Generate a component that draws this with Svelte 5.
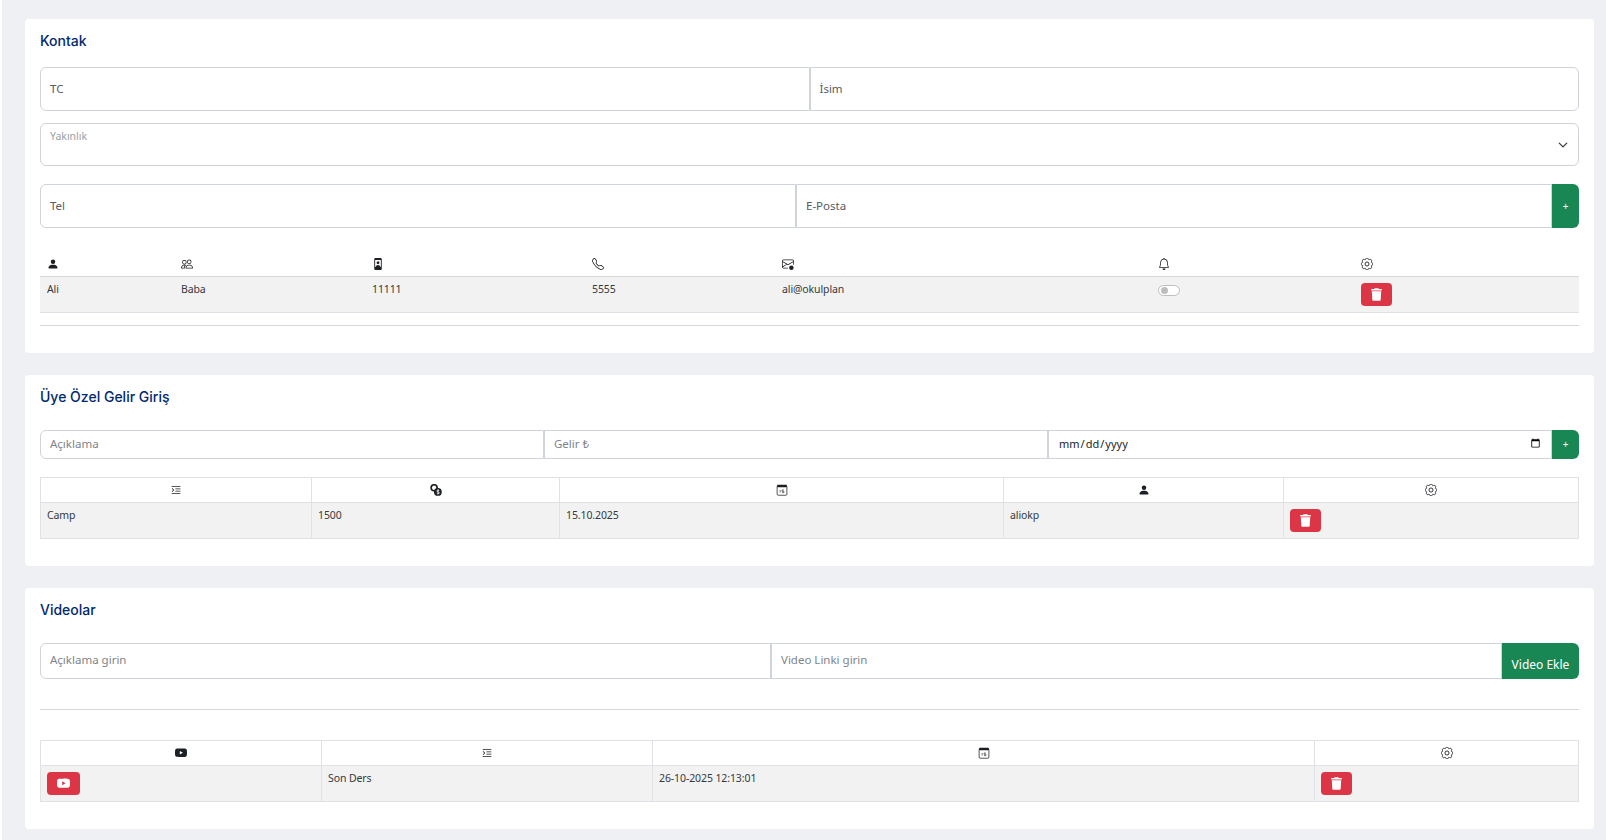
<script lang="ts">
  // Üye detay sayfası: kontak, özel gelir ve video kartları
  const icons: Record<string, string> = {
    person: 'M3 14s-1 0-1-1 1-4 6-4 6 3 6 4-1 1-1 1zm5-6a3 3 0 1 0 0-6 3 3 0 0 0 0 6',
    people:
      'M15 14s1 0 1-1-1-4-5-4-5 3-5 4 1 1 1 1zm-7.978-1L7 12.996c.001-.264.167-1.03.76-1.72C8.312 10.629 9.282 10 11 10c1.717 0 2.687.63 3.24 1.276.593.69.758 1.457.76 1.72l-.008.002-.014.002zM11 7a2 2 0 1 0 0-4 2 2 0 0 0 0 4m3-2a3 3 0 1 1-6 0 3 3 0 0 1 6 0M6.936 9.28a6 6 0 0 0-1.23-.247A7 7 0 0 0 5 9c-4 0-5 3-5 4q0 1 1 1h4.216A2.24 2.24 0 0 1 5 13c0-1.01.377-2.042 1.09-2.904.243-.294.526-.569.846-.816M4.92 10A5.5 5.5 0 0 0 4 13H1c0-.26.164-1.03.76-1.724.545-.636 1.492-1.256 3.16-1.275ZM1.5 5.5a3 3 0 1 1 6 0 3 3 0 0 1-6 0m3-2a2 2 0 1 0 0 4 2 2 0 0 0 0-4',
    badge:
      'M4.5 0A1.5 1.5 0 0 0 3 1.5v13A1.5 1.5 0 0 0 4.5 16h7a1.5 1.5 0 0 0 1.5-1.5v-13A1.5 1.5 0 0 0 11.500 0zM4.200 2.500h7.600v9.500H4.200zM8 4.500a1.900 1.900 0 1 1 0 3.800 1.900 1.900 0 0 1 0-3.800M4.800 12c.4-1.800 1.600-2.800 3.200-2.800s2.800 1 3.200 2.800z',
    phone:
      'M3.654 1.328a.678.678 0 0 0-1.015-.063L1.605 2.3c-.483.484-.661 1.169-.45 1.77a17.6 17.6 0 0 0 4.168 6.608 17.6 17.6 0 0 0 6.608 4.168c.601.211 1.286.033 1.77-.45l1.034-1.034a.678.678 0 0 0-.063-1.015l-2.307-1.794a.68.68 0 0 0-.58-.122l-2.19.547a1.75 1.75 0 0 1-1.657-.459L5.482 8.062a1.75 1.75 0 0 1-.46-1.657l.548-2.19a.68.68 0 0 0-.122-.58zM1.884.511a1.745 1.745 0 0 1 2.612.163L6.29 2.98c.329.423.445.974.315 1.494l-.547 2.19a.68.68 0 0 0 .178.643l2.457 2.457a.68.68 0 0 0 .644.178l2.189-.547a1.75 1.75 0 0 1 1.494.315l2.306 1.794c.829.645.905 1.87.163 2.611l-1.034 1.034c-.74.74-1.846 1.065-2.877.702a18.6 18.6 0 0 1-7.01-4.42 18.6 18.6 0 0 1-4.42-7.009c-.362-1.03-.037-2.137.703-2.877z',
    mail:
      'M2 2a2 2 0 0 0-2 2v8.010A2 2 0 0 0 2 14h5.500a.5.5 0 0 0 0-1H2a1 1 0 0 1-.966-.741l5.640-3.471L8 9.583l7-4.200V8.500a.5.5 0 0 0 1 0V4a2 2 0 0 0-2-2zm3.708 6.208L1 11.105V5.383zM1 4.217V4a1 1 0 0 1 1-1h12a1 1 0 0 1 1 1v.217l-7 4.200zM12.500 10a3 3 0 1 0 0 6 3 3 0 0 0 0-6',
    bell:
      'M8 16a2 2 0 0 0 2-2H6a2 2 0 0 0 2 2M8 1.918l-.797.161A4 4 0 0 0 4 6c0 .628-.134 2.197-.459 3.742-.16.767-.376 1.566-.663 2.258h10.244c-.287-.692-.502-1.490-.663-2.258C12.134 8.197 12 6.628 12 6a4 4 0 0 0-3.203-3.920zM14.220 12c.223.447.481.801.78 1H1c.299-.199.557-.553.78-1C2.680 10.200 3 6.880 3 6c0-2.420 1.720-4.440 4.005-4.901a1 1 0 1 1 1.990 0A5 5 0 0 1 13 6c0 .880.320 4.200 1.220 6',
    indent:
      'M2 3.500a.5.5 0 0 1 .5-.5h11a.5.5 0 0 1 0 1h-11a.5.5 0 0 1-.5-.5m.646 2.146a.5.5 0 0 1 .708 0l2 2a.5.5 0 0 1 0 .708l-2 2a.5.5 0 0 1-.708-.708L4.293 8 2.646 6.354a.5.5 0 0 1 0-.708M7 6.500a.5.5 0 0 1 .5-.5h6a.5.5 0 0 1 0 1h-6a.5.5 0 0 1-.5-.5m0 3a.5.5 0 0 1 .5-.5h6a.5.5 0 0 1 0 1h-6a.5.5 0 0 1-.5-.5m-5 3a.5.5 0 0 1 .5-.5h11a.5.5 0 0 1 0 1h-11a.5.5 0 0 1-.5-.5',
    youtube:
      'M8.051 1.999h.089c.822.003 4.987.033 6.110.335a2.010 2.010 0 0 1 1.415 1.420c.101.380.172.883.220 1.402l.010.104.022.260.008.104c.065.914.073 1.770.074 1.957v.075c-.001.194-.010 1.108-.082 2.060l-.008.105-.009.104c-.050.572-.124 1.140-.235 1.558a2.010 2.010 0 0 1-1.415 1.420c-1.160.312-5.569.334-6.180.335h-.142c-.309 0-1.587-.006-2.927-.052l-.170-.006-.087-.004-.171-.007-.171-.007c-1.110-.049-2.167-.128-2.654-.260a2.010 2.010 0 0 1-1.415-1.419c-.111-.417-.185-.986-.235-1.558L.090 9.820l-.008-.104A31 31 0 0 1 0 7.680v-.123c.002-.215.010-.958.064-1.778l.007-.103.003-.052.008-.104.022-.260.010-.104c.048-.519.119-1.023.220-1.402a2.010 2.010 0 0 1 1.415-1.420c.487-.130 1.544-.210 2.654-.260l.170-.007.172-.006.086-.003.171-.007A100 100 0 0 1 7.858 2zM6.400 5.209v4.818l4.157-2.408z',
  };
  const gearOutline =
    'M9.796 1.343c-.527-1.790-3.065-1.790-3.592 0l-.094.319a.873.873 0 0 1-1.255.520l-.292-.160c-1.640-.892-3.433.902-2.540 2.541l.159.292a.873.873 0 0 1-.520 1.255l-.319.094c-1.790.527-1.790 3.065 0 3.592l.319.094a.873.873 0 0 1 .520 1.255l-.160.292c-.892 1.640.901 3.434 2.541 2.540l.292-.159a.873.873 0 0 1 1.255.520l.094.319c.527 1.790 3.065 1.790 3.592 0l.094-.319a.873.873 0 0 1 1.255-.520l.292.160c1.640.893 3.434-.902 2.540-2.541l-.159-.292a.873.873 0 0 1 .520-1.255l.319-.094c1.790-.527 1.790-3.065 0-3.592l-.319-.094a.873.873 0 0 1-.520-1.255l.160-.292c.893-1.640-.902-3.433-2.541-2.540l-.292.159a.873.873 0 0 1-1.255-.520z';
  const trashPath =
    'M135.200 17.700L128 32H32C14.300 32 0 46.300 0 64S14.300 96 32 96H416c17.700 0 32-14.300 32-32s-14.300-32-32-32H320l-7.200-14.300C307.400 6.800 296.300 0 284.200 0H163.800c-12.100 0-23.200 6.800-28.600 17.700zM416 128H32L53.200 467c1.600 25.300 22.600 45 47.900 45H346.900c25.300 0 46.300-19.700 47.900-45L416 128z';
</script>

{#snippet icon(name: string)}
  <svg class="ico" viewBox="0 0 16 16" aria-hidden="true"><path fill="currentColor" fill-rule="evenodd" d={icons[name]} /></svg>
{/snippet}

{#snippet gear()}
  <svg class="ico" viewBox="0 0 16 16" aria-hidden="true">
    <path d={gearOutline} fill="none" stroke="currentColor" stroke-width="1.200" />
    <circle cx="8" cy="8" r="2.700" fill="none" stroke="currentColor" stroke-width="1.200" />
  </svg>
{/snippet}

{#snippet calendar()}
  <svg class="ico" viewBox="0 0 16 16" aria-hidden="true">
    <rect x="1.500" y="2" width="13" height="13" rx="1.500" fill="none" stroke="currentColor" stroke-width="1" />
    <rect x="1.500" y="1" width="13" height="3.200" rx="1" fill="currentColor" />
    <path d="M5.500 8v3.500M8 8h2.500M8 11.500h2.500M8 8v1.700h2.500v1.800" fill="none" stroke="currentColor" stroke-width="0.8" />
  </svg>
{/snippet}

{#snippet coins()}
  <svg class="ico" viewBox="0 0 16 16" aria-hidden="true">
    <circle cx="5.500" cy="5" r="4" fill="none" stroke="currentColor" stroke-width="2.200" />
    <circle cx="10.500" cy="10.500" r="5.200" fill="currentColor" />
    <path d="M12.300 8.600c-1-.7-3.300-.6-3.300.8s3.600 1 3.600 2.400-2.400 1.300-3.600.7M10.700 7.200v6.600" fill="none" stroke="#fff" stroke-width="1" />
  </svg>
{/snippet}

{#snippet trash()}
  <svg class="trash" viewBox="0 0 448 512" aria-hidden="true"><path fill="currentColor" d={trashPath} /></svg>
{/snippet}

<main class="page">
  <section class="card">
    <h2 class="title first">Kontak</h2>

    <div class="group tall">
      <label class="field"><span>TC</span><input type="text" /></label>
      <label class="field"><span>İsim</span><input type="text" /></label>
    </div>

    <div class="select-box">
      <span class="float-label">Yakınlık</span>
      <svg class="chevron" viewBox="0 0 16 16" aria-hidden="true"><path d="m2 5 6 6 6-6" fill="none" stroke="currentColor" stroke-width="2" stroke-linecap="round" stroke-linejoin="round" /></svg>
    </div>

    <div class="group tall after-select">
      <label class="field"><span>Tel</span><input type="text" /></label>
      <label class="field"><span>E-Posta</span><input type="text" /></label>
      <button class="add">+</button>
    </div>

    <table class="list contacts">
      <colgroup><col /><col /><col /><col /><col /><col /><col /></colgroup>
      <thead>
        <tr>
          <th>{@render icon('person')}</th>
          <th>{@render icon('people')}</th>
          <th>{@render icon('badge')}</th>
          <th>{@render icon('phone')}</th>
          <th>{@render icon('mail')}</th>
          <th>{@render icon('bell')}</th>
          <th>{@render gear()}</th>
        </tr>
      </thead>
      <tbody>
        <tr>
          <td>Ali</td>
          <td>Baba</td>
          <td>11111</td>
          <td>5555</td>
          <td>ali@okulplan</td>
          <td><span class="toggle"></span></td>
          <td><button class="danger">{@render trash()}</button></td>
        </tr>
      </tbody>
    </table>
    <hr class="rule" />
  </section>

  <section class="card income">
    <h2 class="title">Üye Özel Gelir Giriş</h2>

    <div class="group small">
      <input type="text" placeholder="Açıklama" />
      <input type="text" placeholder="Gelir ₺" />
      <input type="date" />
      <button class="add">+</button>
    </div>

    <table class="list grid income-table">
      <colgroup><col /><col /><col /><col /><col /></colgroup>
      <thead>
        <tr>
          <th>{@render icon('indent')}</th>
          <th>{@render coins()}</th>
          <th>{@render calendar()}</th>
          <th>{@render icon('person')}</th>
          <th>{@render gear()}</th>
        </tr>
      </thead>
      <tbody>
        <tr>
          <td>Camp</td>
          <td>1500</td>
          <td>15.10.2025</td>
          <td>aliokp</td>
          <td><button class="danger">{@render trash()}</button></td>
        </tr>
      </tbody>
    </table>
  </section>

  <section class="card videos">
    <h2 class="title">Videolar</h2>

    <div class="group medium">
      <input type="text" placeholder="Açıklama girin" />
      <input type="text" placeholder="Video Linki girin" />
      <button class="add wide">Video Ekle</button>
    </div>

    <hr class="rule video-rule" />

    <table class="list grid video-table">
      <colgroup><col /><col /><col /><col /></colgroup>
      <thead>
        <tr>
          <th>{@render icon('youtube')}</th>
          <th>{@render icon('indent')}</th>
          <th>{@render calendar()}</th>
          <th>{@render gear()}</th>
        </tr>
      </thead>
      <tbody>
        <tr>
          <td><button class="danger">{@render icon('youtube')}</button></td>
          <td>Son Ders</td>
          <td>26-10-2025 12:13:01</td>
          <td><button class="danger">{@render trash()}</button></td>
        </tr>
      </tbody>
    </table>
  </section>
</main>

<style>
  :global(body) {
    margin: 0;
    background: #fff;
    font-family: 'Noto Sans', 'Open Sans', sans-serif;
    color: #212529;
  }
  .page {
    margin-left: 2px;
    min-height: 840px;
    box-sizing: border-box;
    padding: 19px 12px 0 23px;
    background: #eff0f3;
    display: flex;
    flex-direction: column;
    gap: 22px;
  }
  .card {
    background: #fff;
    border-radius: 4px;
    padding: 0 15px 27px;
  }
  .title {
    margin: 0 0 23px;
    padding-top: 11px;
    height: 21px;
    font-family: Inter, 'Noto Sans', sans-serif;
    font-size: 14px;
    line-height: 21px;
    font-weight: 500;
    color: #012970;
  }
  .title.first {
    margin-bottom: 16px;
  }

  .group {
    display: flex;
  }
  .group input,
  .field {
    flex: 1 1 0;
    min-width: 0;
    box-sizing: border-box;
    height: 100%;
    padding: 0 8px 2px 9px;
    border: 1px solid #ced4da;
    background: #fff;
    font: inherit;
    font-size: 11.5px;
    color: #212529;
    outline: none;
  }
  .group input[type='date'] {
    font-size: 11px;
  }
  .group input::placeholder {
    color: #7d858c;
    opacity: 1;
  }
  .group > :first-child {
    border-radius: 6px 0 0 6px;
  }
  .group > :last-child {
    border-radius: 0 6px 6px 0;
  }
  .tall {
    height: 44px;
  }
  .small {
    height: 29px;
  }
  .medium {
    height: 36px;
  }
  .field {
    display: flex;
    align-items: center;
    color: #555c63;
  }
  .field input {
    flex: 1;
    min-width: 0;
    border: 0;
    padding: 0;
    height: auto;
    background: transparent;
  }
  .after-select {
    margin-top: 18px;
  }
  .add {
    flex: none;
    width: 27px;
    border: 0;
    padding: 0;
    background: #198754;
    color: #fff;
    font: inherit;
    font-size: 10px;
  }
  .add.wide {
    width: 77px;
    padding-top: 7px;
    font-size: 12px;
  }

  .select-box {
    position: relative;
    margin-top: 12px;
    box-sizing: border-box;
    height: 43px;
    border: 1px solid #ced4da;
    border-radius: 6px;
  }
  .float-label {
    position: absolute;
    left: 9px;
    top: 5px;
    font-size: 10.500px;
    line-height: 14px;
    color: #9a9fa4;
  }
  .chevron {
    position: absolute;
    right: 10px;
    top: 16px;
    width: 10px;
    height: 10px;
    color: #343a40;
  }

  .list {
    width: 100%;
    border-collapse: collapse;
    table-layout: fixed;
    font-size: 10.500px;
    letter-spacing: -0.1px;
    line-height: 16px;
  }
  .list th {
    height: 25px;
    padding: 0 6px;
    box-sizing: border-box;
    font-weight: 400;
    text-align: left;
    border-bottom: 1px solid #dee2e6;
  }
  .list td {
    height: 36px;
    padding: 4px 6px;
    box-sizing: border-box;
    vertical-align: top;
    background: #f2f2f2;
    color: #343a40;
    border-bottom: 1px solid #dee2e6;
  }
  .ico {
    display: block;
    width: 12px;
    height: 12px;
    color: #1c1f23;
  }
  .contacts {
    margin-top: 23px;
  }
  .contacts th {
    padding: 2px 7px 0;
    border-bottom: 1px solid #d5d8db;
  }
  .contacts td {
    padding-left: 7px;
  }
  .contacts col:nth-child(1) { width: 134px; }
  .contacts col:nth-child(2) { width: 191px; }
  .contacts col:nth-child(3) { width: 220px; }
  .contacts col:nth-child(4) { width: 190px; }
  .contacts col:nth-child(5) { width: 376px; }
  .contacts col:nth-child(6) { width: 203px; }

  .grid {
    margin-top: 18px;
  }
  .grid th,
  .grid td {
    border: 1px solid #dee2e6;
  }
  .grid th .ico {
    margin: 0 auto;
  }
  .income-table col:nth-child(1) { width: 271px; }
  .income-table col:nth-child(2) { width: 248px; }
  .income-table col:nth-child(3) { width: 444px; }
  .income-table col:nth-child(4) { width: 280px; }
  .video-table {
    margin-top: 30px;
  }
  .video-table col:nth-child(1) { width: 281px; }
  .video-table col:nth-child(2) { width: 331px; }
  .video-table col:nth-child(3) { width: 662px; }

  .danger {
    display: flex;
    align-items: center;
    justify-content: center;
    width: 31px;
    height: 23px;
    margin-top: 2px;
    padding: 0;
    border: 0;
    border-radius: 4px;
    background: #dc3545;
    color: #fff;
  }
  .danger .trash {
    width: 11px;
    height: 13px;
  }
  .danger .ico {
    color: #fff;
    width: 13px;
    height: 13px;
  }
  .video-table .danger:has(.ico) {
    width: 33px;
  }
  .toggle {
    display: block;
    position: relative;
    width: 20px;
    height: 9px;
    margin-top: 4px;
    border: 1px solid #bdbdbd;
    border-radius: 6px;
    background: #fff;
  }
  .toggle::before {
    content: '';
    position: absolute;
    left: 2px;
    top: 1px;
    width: 7px;
    height: 7px;
    border-radius: 50%;
    background: #bdbdbd;
  }
  .rule {
    margin: 12px 0 0;
    border: 0;
    border-top: 1px solid #d4d6d8;
  }
  .video-rule {
    margin-top: 30px;
  }
</style>
